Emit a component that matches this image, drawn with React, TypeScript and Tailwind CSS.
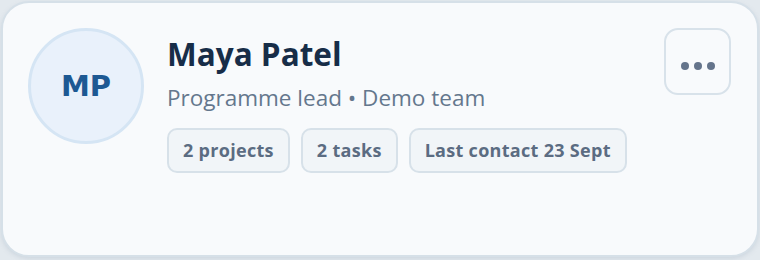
import React from "react";

export default function App() {
  const chip =
    "h-[45px] px-[14px] flex items-center rounded-[10px] border-2 border-[#d7e1e9] bg-[#f1f5f8] text-[18px] tracking-[0.3px] font-bold text-[#5b6c82]";
  return (
    <div className="w-[760px] h-[260px] bg-[#e3e9ee] p-px" style={{ fontFamily: '"Open Sans", "Noto Sans", sans-serif' }}>
      <div className="h-[256px] rounded-[28px] border-2 border-[#d6e0e8] bg-[#f8fafc] shadow-[0_2px_4px_rgba(148,163,184,0.25)] flex items-start pl-[25px] pt-[25px] pr-[26px]">
        <div className="w-[116px] h-[116px] shrink-0 rounded-full border-[3px] border-[#d5e5f4] bg-[#e9f1fb] flex items-center justify-center">
          <span className="text-[29px] font-bold text-[#1d5993] leading-none" style={{ fontFamily: '"DejaVu Sans", sans-serif' }}>MP</span>
        </div>
        <div className="ml-[23px] flex-1 pt-[8px]">
          <div className="text-[31.5px] font-bold leading-[36px] text-[#172d48]">Maya Patel</div>
          <div className="mt-[12px] text-[22.5px] leading-[28px] text-[#64778d]">Programme lead • Demo team</div>
          <div className="mt-[16px] flex gap-[11px]">
            <span className={chip}>2 projects</span>
            <span className={chip}>2 tasks</span>
            <span className={chip}>Last contact 23 Sept</span>
          </div>
        </div>
        <button className="w-[67px] h-[67px] shrink-0 rounded-[14px] border-2 border-[#d8e2ea] bg-[#f8fafc] flex items-center justify-center gap-[5px] pt-[8px]">
          <span className="w-[8px] h-[8px] rounded-full bg-[#64748b]" />
          <span className="w-[8px] h-[8px] rounded-full bg-[#64748b]" />
          <span className="w-[8px] h-[8px] rounded-full bg-[#64748b]" />
        </button>
      </div>
    </div>
  );
}
